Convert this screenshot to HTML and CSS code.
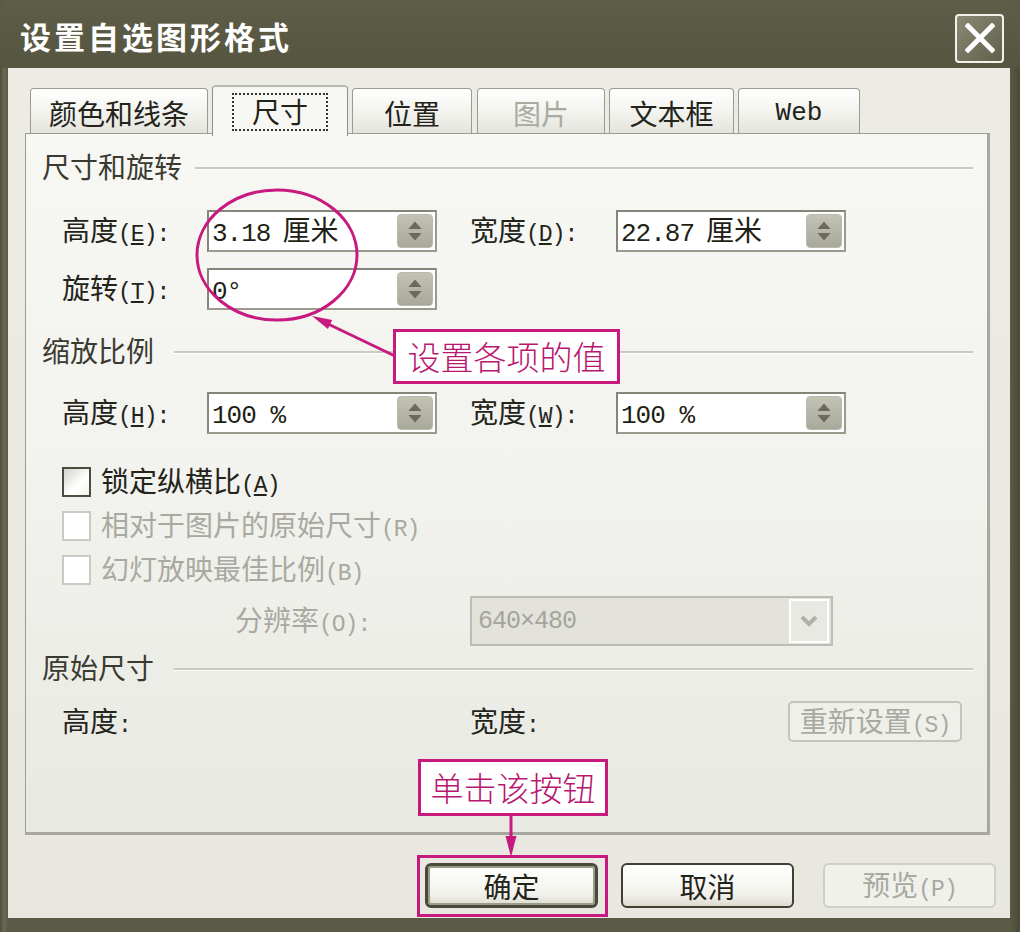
FILE: index.html
```html
<!DOCTYPE html>
<html lang="zh-CN">
<head>
<meta charset="utf-8">
<title>设置自选图形格式</title>
<link rel="stylesheet" href="styles.css">
</head>
<body>
<div class="window">
  <div class="titlebar">
    <div class="title">设置自选图形格式</div>
    <div class="close">
      <svg width="30" height="30" viewBox="0 0 30 30"><path d="M3 3 L27 27 M27 3 L3 27" stroke="#ffffff" stroke-width="5" stroke-linecap="square"/></svg>
    </div>
  </div>
  <div class="client">
    <div class="tabs">
      <div class="tab t1">颜色和线条</div>
      <div class="tab t2 active"><span class="focus">尺寸</span></div>
      <div class="tab t3">位置</div>
      <div class="tab t4 disabled">图片</div>
      <div class="tab t5">文本框</div>
      <div class="tab t6"><span class="mono">Web</span></div>
    </div>
    <div class="panel">
      <div class="group-head gh1"><span class="gtext">尺寸和旋转</span><i class="gline"></i></div>
      <div class="row row1">
        <div class="lbl">高度<span class="mn">(<u>E</u>):</span></div>
        <div class="spin"><span class="val"><span class="num">3.18</span>厘米</span><span class="sbtn"><svg width="36" height="34" viewBox="0 0 36 34"><path d="M11 15 L18 7 L25 15 Z" fill="#6b6b59"/><path d="M11 19 L18 27 L25 19 Z" fill="#6b6b59"/></svg></span></div>
        <div class="lbl lbl2">宽度<span class="mn">(<u>D</u>):</span></div>
        <div class="spin"><span class="val"><span class="num">22.87</span>厘米</span><span class="sbtn"><svg width="36" height="34" viewBox="0 0 36 34"><path d="M11 15 L18 7 L25 15 Z" fill="#6b6b59"/><path d="M11 19 L18 27 L25 19 Z" fill="#6b6b59"/></svg></span></div>
      </div>
      <div class="row row2">
        <div class="lbl">旋转<span class="mn">(<u>T</u>):</span></div>
        <div class="spin"><span class="val"><span class="num">0°</span></span><span class="sbtn"><svg width="36" height="34" viewBox="0 0 36 34"><path d="M11 15 L18 7 L25 15 Z" fill="#6b6b59"/><path d="M11 19 L18 27 L25 19 Z" fill="#6b6b59"/></svg></span></div>
      </div>
      <div class="group-head gh2"><span class="gtext">缩放比例</span><i class="gline"></i></div>
      <div class="row row3">
        <div class="lbl">高度<span class="mn">(<u>H</u>):</span></div>
        <div class="spin"><span class="val"><span class="num">100 %</span></span><span class="sbtn"><svg width="36" height="34" viewBox="0 0 36 34"><path d="M11 15 L18 7 L25 15 Z" fill="#6b6b59"/><path d="M11 19 L18 27 L25 19 Z" fill="#6b6b59"/></svg></span></div>
        <div class="lbl lbl2">宽度<span class="mn">(<u>W</u>):</span></div>
        <div class="spin"><span class="val"><span class="num">100 %</span></span><span class="sbtn"><svg width="36" height="34" viewBox="0 0 36 34"><path d="M11 15 L18 7 L25 15 Z" fill="#6b6b59"/><path d="M11 19 L18 27 L25 19 Z" fill="#6b6b59"/></svg></span></div>
      </div>
      <div class="row chk chk1">
        <span class="box"></span><span class="ctext">锁定纵横比<span class="mn">(<u>A</u>)</span></span>
      </div>
      <div class="row chk chk2 off">
        <span class="box"></span><span class="ctext">相对于图片的原始尺寸<span class="mn">(R)</span></span>
      </div>
      <div class="row chk chk3 off">
        <span class="box"></span><span class="ctext">幻灯放映最佳比例<span class="mn">(B)</span></span>
      </div>
      <div class="row res">
        <div class="reslbl">分辨率<span class="mn">(O):</span></div>
        <div class="select">
          <span class="selval">640×480</span>
          <span class="dd"><svg width="20" height="14" viewBox="0 0 20 14"><path d="M3 3 L10 10 L17 3" fill="none" stroke="#b0b0a8" stroke-width="4"/></svg></span>
        </div>
      </div>
      <div class="group-head gh3"><span class="gtext">原始尺寸</span><i class="gline"></i></div>
      <div class="row orig">
        <div class="olbl1">高度<span class="mn">:</span></div>
        <div class="olbl2">宽度<span class="mn">:</span></div>
        <div class="resetbtn"><span>重新设置<span class="mn">(S)</span></span></div>
      </div>
    </div>
    <div class="buttons">
      <div class="btn default">确定</div>
      <div class="btn cancel">取消</div>
      <div class="btn preview"><span>预览<span class="mn">(P)</span></span></div>
    </div>
  </div>

  <svg class="marks" width="1020" height="932" viewBox="0 0 1020 932">
    <ellipse cx="277" cy="255" rx="80" ry="65" fill="none" stroke="#c8197f" stroke-width="3"/>
    <line x1="397" y1="357" x2="326" y2="323" stroke="#c8197f" stroke-width="3"/>
    <path d="M312 316 L327.9 329.1 L332.2 320.1 Z" fill="#c8197f"/>
    <line x1="511" y1="816" x2="511" y2="840" stroke="#c8197f" stroke-width="3"/>
    <path d="M511 857 L505.5 836 L516.5 836 Z" fill="#c8197f"/>
  </svg>
  <div class="callout c1">设置各项的值</div>
  <div class="callout c2">单击该按钮</div>
  <div class="hilite"></div>
</div>
</body>
</html>
```

FILE: styles.css
```css
* { box-sizing: border-box; }
html, body { margin: 0; padding: 0; }
body {
  width: 1020px;
  height: 932px;
  background: #5a5945;
  font-family: "Noto Sans CJK SC", "Noto Sans", sans-serif;
  color: #23231a;
  overflow: hidden;
}
.window {
  position: relative;
  width: 1020px;
  height: 932px;
  background: linear-gradient(90deg, #4e4d3b 0, #6a6955 4px, #5b5a46 8px, #5b5a46 1010px, #4a4937 1020px);
  border-radius: 10px 10px 0 0;
}
.titlebar {
  height: 68px;
  display: flex;
  align-items: center;
  justify-content: space-between;
  padding: 0 16px 0 20px;
  background: linear-gradient(#5e5d48, #56553f);
  border-radius: 10px 10px 0 0;
}
.title {
  color: #ffffff;
  font-size: 31px;
  font-weight: 700;
  letter-spacing: 3px;
  line-height: 1;
  margin-top: 2px;
}
.close {
  width: 49px;
  height: 49px;
  border: 2px solid #f2f2ea;
  border-radius: 4px;
  background: linear-gradient(135deg, #8a8974, #605f4b);
  display: flex;
  align-items: center;
  justify-content: center;
  margin-top: 8px;
}
.client {
  margin: 0 10px 0 8px;
  height: 850px;
  background: linear-gradient(#ecece5, #e8e8e0);
  padding: 17px 0 0 17px;
}
.tabs {
  display: flex;
  align-items: flex-end;
  height: 48px;
  padding-left: 5px;
  gap: 4px;
}
.tab {
  height: 45px;
  border: 1px solid #9b9b90;
  border-bottom: none;
  border-radius: 4px 4px 0 0;
  background: linear-gradient(#ffffff, #f1f1ec 60%, #e4e4dc);
  font-size: 28px;
  line-height: 1;
  display: flex;
  align-items: center;
  justify-content: center;
  padding-top: 4px;
  color: #23231a;
}
.t1 { width: 178px; }
.t2 { width: 136px; }
.t3 { width: 120px; }
.t4 { width: 128px; margin-left: 1px; }
.t5 { width: 125px; }
.t6 { width: 122px; }
.tab.disabled { color: #aaaaa2; }
.tab.active {
  height: 51px;
  margin-bottom: -3px;
  position: relative;
  z-index: 2;
  background: #f7f7f4;
  border-color: #8f8f84;
  border-top: 2px solid #b8b8ac;
  padding-top: 0;
}
.focus {
  display: inline-block;
  border: 2px dotted #33332a;
  padding: 2px 18px 4px;
}
.mono {
  font-family: "Liberation Mono", monospace;
  font-size: 26px;
}
.panel {
  width: 965px;
  height: 702px;
  border: 1px solid #9c9c92;
  border-right: 3px solid #a8a89e;
  border-bottom: 3px solid #a8a89e;
  background: linear-gradient(#f7f7f4, #f2f2ee 50%, #e9e9e3);
  padding-top: 14px;
  position: relative;
}
.group-head {
  height: 36px;
  display: flex;
  align-items: center;
  padding: 0 14px 0 16px;
}
.gtext {
  font-size: 28px;
  line-height: 1;
  color: #3a3a30;
}
.gline {
  flex: 1;
  height: 3px;
  border-top: 2px solid #c9c9c1;
  border-bottom: 1px solid #ffffff;
  margin-left: 13px;
  margin-top: 4px;
}
.gh2 .gline, .gh3 .gline { margin-left: 20px; }
.row {
  display: flex;
  align-items: center;
  padding-left: 36px;
}
.row1 { margin-top: 26px; height: 42px; }
.row2 { margin-top: 16px; height: 42px; }
.gh2 { margin-top: 22px; }
.row3 { margin-top: 24px; height: 42px; }
.chk1 { margin-top: 33px; height: 30px; }
.chk2 { margin-top: 14px; height: 30px; }
.chk3 { margin-top: 14px; height: 30px; }
.res { margin-top: 11px; height: 50px; }
.gh3 { margin-top: 3px; }
.orig { margin-top: 16px; height: 41px; }

.lbl {
  width: 145px;
  font-size: 28px;
  line-height: 1;
  white-space: nowrap;
}
.lbl2 { width: 146px; margin-left: 33px; }
.mn {
  font-family: "Liberation Mono", monospace;
  font-size: 23px;
  letter-spacing: -1px;
}
.spin {
  width: 230px;
  height: 42px;
  border: 2px solid #85857a;
  border-right-color: #9a9a8f;
  border-bottom-color: #9a9a8f;
  background: #ffffff;
  display: flex;
  align-items: center;
  padding: 0 2px 0 3px;
}
.val {
  flex: 1;
  font-size: 28px;
  line-height: 1;
  white-space: nowrap;
  color: #1f1f16;
}
.num {
  font-family: "Liberation Mono", monospace;
  font-size: 26px;
  letter-spacing: -1px;
  margin-right: 12px;
}
.sbtn {
  width: 36px;
  height: 34px;
  border-radius: 4px;
  background: linear-gradient(#c3c3b5, #a9a99b);
  border: 1px solid #b9b9ad;
  display: flex;
  align-items: center;
  justify-content: center;
  overflow: hidden;
}
.chk { gap: 10px; }
.box {
  width: 29px;
  height: 30px;
  border: 2px solid #4c4c3e;
  background: linear-gradient(135deg, #d4d4ca, #ffffff 60%, #f4f4ee);
}
.off .box {
  border-color: #cacac2;
  background: #ffffff;
}
.ctext {
  font-size: 28px;
  line-height: 1;
  white-space: nowrap;
}
.off .ctext { color: #a9a9a1; }
.reslbl {
  width: 408px;
  padding-left: 173px;
  font-size: 28px;
  line-height: 1;
  white-space: nowrap;
  color: #a9a9a1;
}
.select {
  width: 363px;
  height: 50px;
  border: 2px solid #bdbdb5;
  background: #e3e3dc;
  display: flex;
  align-items: center;
  justify-content: space-between;
  padding: 0 2px 0 6px;
}
.selval {
  font-family: "Liberation Mono", monospace;
  font-size: 25px;
  color: #a5a59d;
  letter-spacing: -1px;
}
.dd {
  width: 40px;
  height: 44px;
  border: 2px solid #ffffff;
  background: #e9e9e3;
  display: flex;
  align-items: center;
  justify-content: center;
}
.olbl1 {
  width: 408px;
  font-size: 28px;
  line-height: 1;
}
.olbl2 {
  width: 318px;
  font-size: 28px;
  line-height: 1;
}
.resetbtn {
  width: 174px;
  height: 41px;
  border: 2px solid #c4c4bb;
  border-radius: 5px;
  background: #f0f0eb;
  color: #a9a9a1;
  font-size: 28px;
  line-height: 1;
  display: flex;
  align-items: center;
  justify-content: center;
  white-space: nowrap;
}
.buttons {
  display: flex;
  margin-top: 28px;
  padding-left: 400px;
}
.btn {
  width: 173px;
  height: 45px;
  border-radius: 6px;
  font-size: 28px;
  line-height: 1;
  display: flex;
  align-items: center;
  justify-content: center;
  background: linear-gradient(#ffffff, #f2f2ec 70%, #dedbd0);
  white-space: nowrap;
}
.default {
  border: 3px solid #4a4a3b;
  box-shadow: inset 0 0 0 2px #9c9b88;
}
.cancel {
  margin-left: 23px;
  border: 2px solid #3f3f32;
}
.preview {
  margin-left: 29px;
  border: 2px solid #cfcfc7;
  color: #a9a9a1;
  background: #f1f1ec;
}
.marks {
  position: absolute;
  left: 0;
  top: 0;
  pointer-events: none;
}
.callout {
  position: absolute;
  border: 3px solid #c8197f;
  background: #ffffff;
  color: #b8166f;
  font-size: 33px;
  line-height: 1;
  display: flex;
  align-items: center;
  justify-content: center;
  white-space: nowrap;
  font-weight: 300;
}
.c1 { left: 393px; top: 329px; width: 227px; height: 55px; }
.c2 { left: 418px; top: 759px; width: 190px; height: 57px; }
.hilite {
  position: absolute;
  left: 417px;
  top: 855px;
  width: 191px;
  height: 62px;
  border: 3px solid #c8197f;
}
```
